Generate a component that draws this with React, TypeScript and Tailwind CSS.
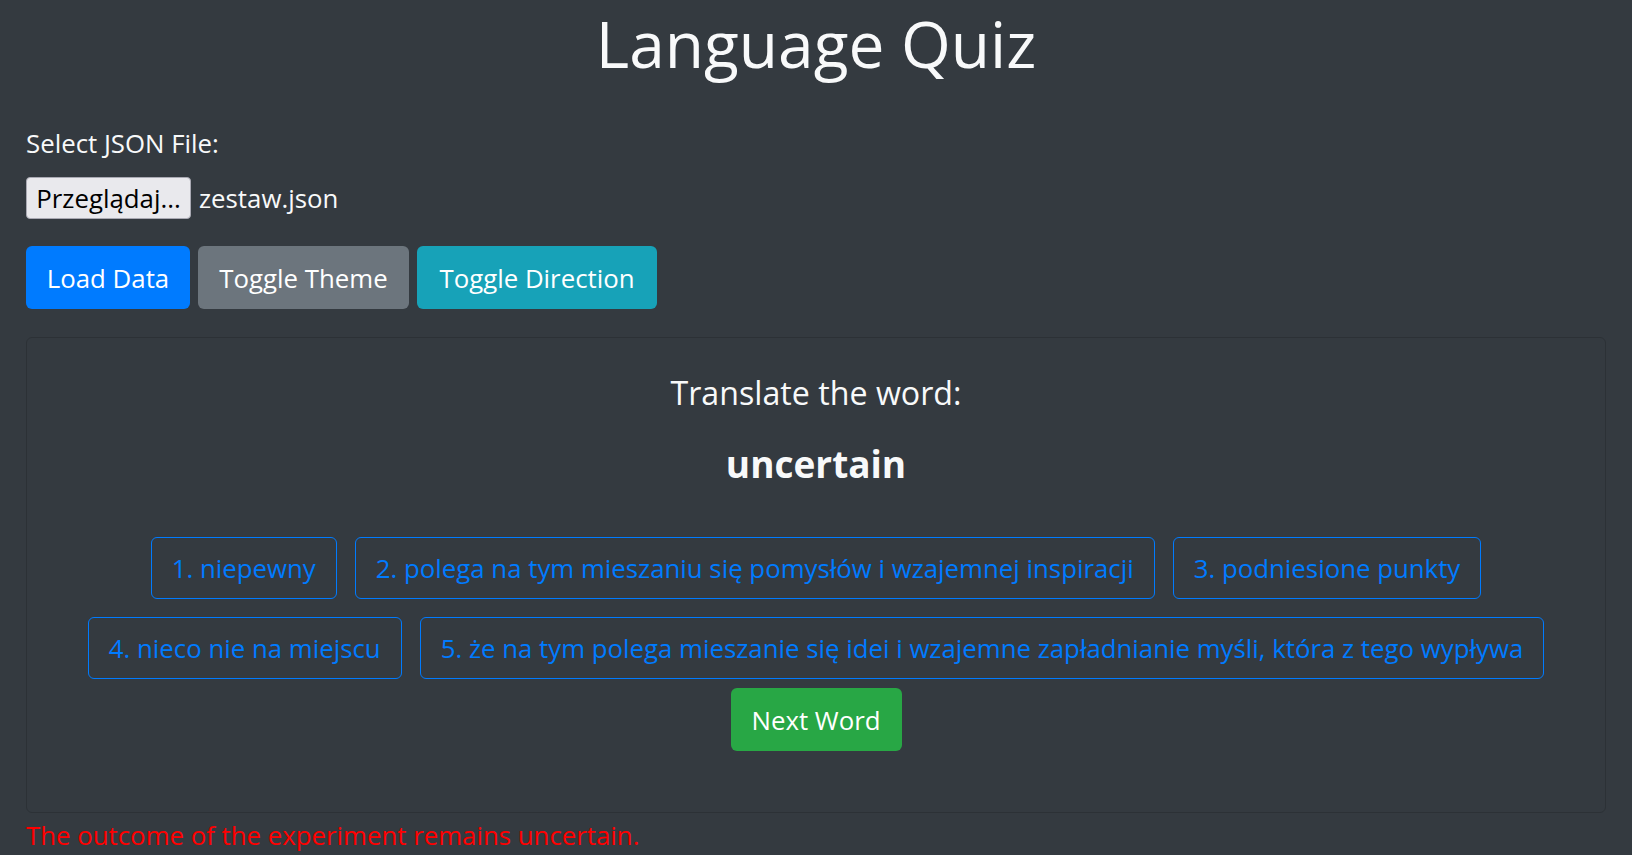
import React from "react";

const options = [
  "1. niepewny",
  "2. polega na tym mieszaniu się pomysłów i wzajemnej inspiracji",
  "3. podniesione punkty",
  "4. nieco nie na miejscu",
  "5. że na tym polega mieszanie się idei i wzajemne zapładnianie myśli, która z tego wypływa",
];

export default function App() {
  return (
    <div className="min-h-screen bg-white">
      <div className="w-[1632px] bg-[#343a40] px-[26px] font-['Open_Sans',sans-serif] text-[25.8px] leading-[40px] text-[#f8f9fa]">
        <h1 className="pt-[4px] text-center text-[64px] font-normal leading-[79px]">Language Quiz</h1>

        <div className="mt-[40px]">Select JSON File:</div>

        <div className="mt-[14px] flex items-center">
          <button className="flex h-[42px] w-[165px] items-center justify-center rounded-[4px] border border-[#a9a9b3] bg-[#e9e9ed] text-[25.8px] text-black">
            Przeglądaj...
          </button>
          <span className="ml-[8px]">zestaw.json</span>
        </div>

        <div className="mt-[27px] flex gap-[8px]">
          <button className="flex h-[63px] w-[164px] items-center justify-center rounded-[6px] bg-[#007bff] text-white">
            Load Data
          </button>
          <button className="flex h-[63px] w-[211px] items-center justify-center rounded-[6px] bg-[#6c757d] text-white">
            Toggle Theme
          </button>
          <button className="flex h-[63px] w-[240px] items-center justify-center rounded-[6px] bg-[#17a2b8] text-white">
            Toggle Direction
          </button>
        </div>

        <div className="mt-[28px] flex h-[476px] flex-col items-center rounded-[6px] border border-[#2c3136] px-[33px] pt-[35px]">
          <h5 className="text-[32.2px] font-normal leading-[40px]">Translate the word:</h5>
          <h4 className="mt-[27px] text-[37px] font-bold leading-[48px]">uncertain</h4>
          <div className="mt-[49px] flex flex-wrap justify-center gap-[18px]">
            {options.map((o) => (
              <button
                key={o}
                className="flex h-[62px] items-center rounded-[6px] border border-[#007bff] px-[20px] text-[#007bff]"
              >
                {o}
              </button>
            ))}
          </div>
          <button className="mt-[9px] flex h-[63px] w-[171px] items-center justify-center rounded-[6px] bg-[#28a745] text-white">
            Next Word
          </button>
        </div>

        <p className="mt-[2px] text-[#ff0000]">The outcome of the experiment remains uncertain.</p>
      </div>
    </div>
  );
}
